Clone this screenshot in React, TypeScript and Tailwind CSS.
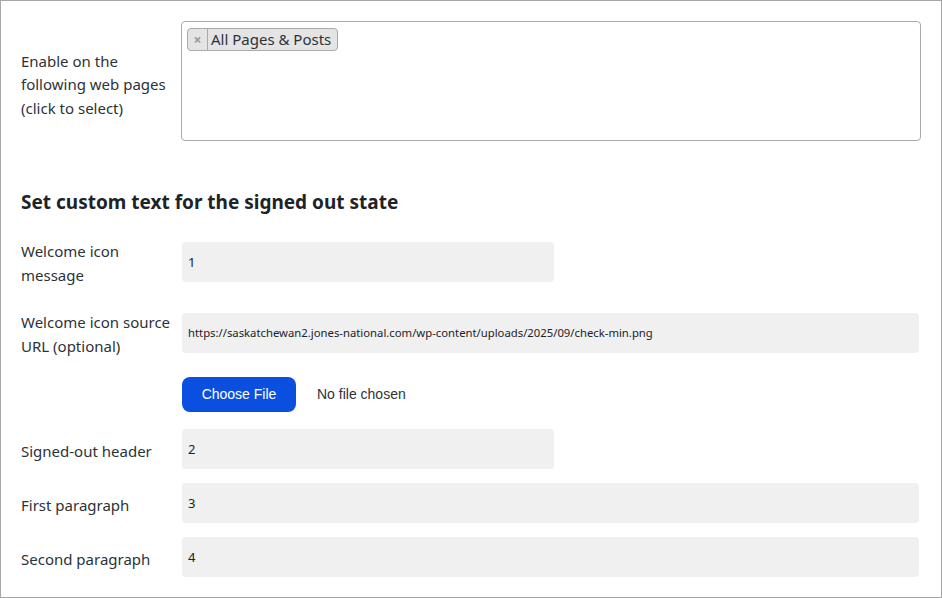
import React from 'react';

function TextRow({
  label,
  value,
  wide,
  small,
  className
}: {
  label: React.ReactNode;
  value: string;
  wide?: boolean;
  small?: boolean;
  className?: string;
}) {
  return (
    <div className={`flex items-center ${className ?? ''}`}>
      <label className="w-[161px] shrink-0 pt-[3px] text-[15px] leading-[24px] text-[#2c3338]">{label}</label>
      <input
        type="text"
        readOnly
        value={value}
        className={`h-[40px] rounded-[4px] bg-[#f0f0f0] px-[6px] text-[#1d2327] outline-none ${
          wide ? 'flex-1 mr-[2px]' : 'w-[372px]'
        } ${small ? 'text-[11.3px]' : 'text-[13px]'}`}
      />
    </div>
  );
}

export default function App() {
  return (
    <div className="h-[598px] w-[942px] overflow-hidden border border-[#a7a7a7] bg-white pl-[20px] pr-[20px] pt-[20px] font-['Noto_Sans',sans-serif]">
      {/* page selector */}
      <div className="flex items-center">
        <div className="w-[160px] shrink-0 pt-[8px] text-[15px] leading-[23.5px] text-[#2c3338]">
          Enable on the following web pages (click to select)
        </div>
        <div className="h-[120px] flex-1 rounded-[4px] border border-[#aaaaaa] bg-white px-[5px] pt-[5px]">
          <span className="inline-flex h-[23px] items-stretch rounded-[4px] border border-[#aaaaaa] bg-[#e4e4e4] text-[15px] text-[#2c3338]">
            <span className="flex w-[20px] items-center justify-center border-r border-[#aaaaaa] text-[14px] font-bold text-[#999999]">×</span>
            <span className="flex items-center pl-[3px] pr-[6px] leading-none">All Pages &amp; Posts</span>
          </span>
        </div>
      </div>

      <h2 className="mt-[48px] text-[19px] font-bold leading-[26px] text-[#1d2327]">
        Set custom text for the signed out state
      </h2>

      <TextRow className="mt-[21px]" label="Welcome icon message" value="1" />
      <TextRow className="mt-[20px]" label="Welcome icon source URL (optional)" wide small value="https://saskatchewan2.jones-national.com/wp-content/uploads/2025/09/check-min.png" />

      <div className="mt-[19px] flex items-center pl-[161px]">
        <button className="h-[35px] w-[114px] rounded-[8px] bg-[#0b4fe1] font-['Liberation_Sans',sans-serif] text-[14px] text-white">
          Choose File
        </button>
        <span className="ml-[21px] font-['Liberation_Sans',sans-serif] text-[14px] text-[#2c3338]">No file chosen</span>
      </div>

      <TextRow className="mt-[17px]" label="Signed-out header" value="2" />
      <TextRow className="mt-[14px]" label="First paragraph" wide value="3" />
      <TextRow className="mt-[14px]" label="Second paragraph" wide value="4" />
    </div>
  );
}
